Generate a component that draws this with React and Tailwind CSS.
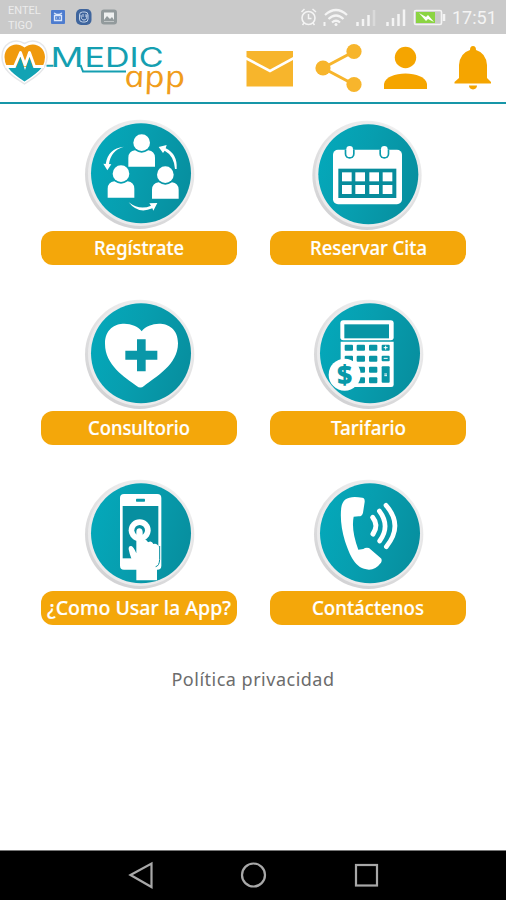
const BadgeDisc = ({ cx = 333, cy = 190, children }) => (
  <svg viewBox="150 18 348 342" className="ml-[39px] block h-[114px] w-[116px]">
    <defs>
      <linearGradient id="disc" x1="0" y1="0.3" x2="1" y2="0.6">
        <stop offset="0" stopColor="#04a8ba" />
        <stop offset="0.45" stopColor="#079eaf" />
        <stop offset="1" stopColor="#078f9f" />
      </linearGradient>
      <linearGradient id="rim" x1="0.8" y1="0" x2="0.2" y2="1">
        <stop offset="0" stopColor="#f2f2f2" />
        <stop offset="1" stopColor="#d0d0d2" />
      </linearGradient>
    </defs>
    <circle cx={cx - 4} cy={cy + 3} r="164" fill="url(#rim)" />
    <circle cx={cx - 2} cy={cy + 1} r="157" fill="#ebebec" />
    <circle cx={cx} cy={cy} r="150" fill="url(#disc)" />
    {children}
  </svg>
);

const Person = ({ x, y }) => (
  <g transform={`translate(${x} ${y})`} fill="#fff">
    <circle cx="0" cy="25" r="25" />
    <path d="M-40 97V70Q-39 50-20 48Q0 62 20 48Q39 50 40 70V97Z" />
  </g>
);

const RegisterIcon = () => (
  <BadgeDisc>
    <Person x={335} y={73} />
    <Person x={273} y={166} />
    <Person x={406} y={169} />
    <g fill="#fff">
      <path d="M281 110Q234 115 227 162L220 161L232 181L244 163L237 162Q242 122 281 110Z" />
      <path d="M440 177Q443 132 407 115L410 105L386 111L399 129L404 122Q432 137 435 177Z" />
      <path d="M296 277Q325 314 367 295L370 302L382 279L358 280L363 287Q329 302 296 277Z" />
    </g>
  </BadgeDisc>
);

const CalendarIcon = () => (
  <BadgeDisc cx={328} cy={193}>
    <rect x="222" y="119" width="207" height="164" rx="15" fill="#fff" />
    <rect x="238" y="176" width="174" height="88" fill="#078c9c" />
    {[187, 225].map((y) =>
      [249, 289, 331, 371].map((x) => (
        <rect key={`${x}-${y}`} x={x} y={y} width="29" height="27" fill="#fff" />
      ))
    )}
    {[272, 376].map((x) => (
      <g key={x}>
        <path d={`M${x - 15} 119V131a15 15 0 0 0 30 0V119Z`} fill="#0a9bac" />
        <rect x={x - 10} y="108" width="20" height="33" rx="10" fill="#fff" />
      </g>
    ))}
  </BadgeDisc>
);

const ClinicIcon = () => (
  <BadgeDisc>
    <path
      d="M335 124C309 90 225 89 225 161C225 226 285 261 320 288Q331 297 342 288C376 261 444 225 444 160C444 89 362 90 335 124Z"
      fill="#fff"
    />
    <path d="M321 148h26v34h35v27h-35v35h-26v-35h-35v-27h35Z" fill="#0a97a8" />
  </BadgeDisc>
);

const CalculatorIcon = () => (
  <BadgeDisc>
    <rect x="244" y="91" width="160" height="60" rx="9" fill="#fff" />
    <rect x="256" y="103" width="134" height="42" fill="#0895a5" />
    <path d="M245 155H404V284Q404 291 397 291H245Z" fill="#fff" />
    {[164, 197, 230, 262].map((y) =>
      [257, 293, 330].map((x) => (
        <rect key={`${x}-${y}`} x={x} y={y} width="25" height="18" rx="3" fill="#0895a5" />
      ))
    )}
    <rect x="368" y="164" width="24" height="18" rx="3" fill="#0895a5" />
    <rect x="368" y="197" width="24" height="17" rx="3" fill="#0895a5" />
    <rect x="368" y="229" width="24" height="49" rx="3" fill="#0895a5" />
    <path d="M374 173h12M380 167v12M374 205h12M376 252h8M376 257h8" stroke="#fff" strokeWidth="3" />
    <circle cx="257" cy="254" r="48" fill="#fff" />
    <text
      x="257"
      y="282"
      textAnchor="middle"
      fontFamily="Open Sans, sans-serif"
      fontWeight="800"
      fontSize="79"
      fill="#0899a9"
    >
      $
    </text>
  </BadgeDisc>
);

const TapPhoneIcon = () => (
  <BadgeDisc>
    <rect x="270" y="72" width="124" height="227" rx="12" fill="#fff" />
    <rect x="278" y="108" width="107" height="157" fill="#078fa0" />
    <rect x="318" y="86" width="27" height="9" rx="2" fill="#0899a9" />
    <circle cx="329" cy="181" r="33" fill="#fff" />
    <circle cx="329" cy="181" r="16" fill="#078fa0" />
    <path
      d="M319 331V297Q301 265 296 238Q295 227 304 228Q311 230 319 250V185Q320 175 328 175Q336 175 338 185V211Q350 205 354 217Q365 210 370 222Q382 218 387 232Q391 240 389 263Q388 283 381 296V331Z"
      fill="#fff"
    />
    <path d="M377 290Q388 288 389 268V228" stroke="#078fa0" strokeWidth="3" fill="none" />
  </BadgeDisc>
);

const CallIcon = () => (
  <BadgeDisc>
    <path
      d="M310 83Q318 84 317 96L312 128Q310 139 299 139L284 140Q276 180 298 239L313 237Q320 231 330 234L364 263Q371 268 366 278Q350 299 330 299C288 298 272 254 258 214C247 178 243 142 247 112Q252 72 310 83Z"
      fill="#fff"
    />
    <g fill="none" stroke="#fff" strokeLinecap="round">
      <path d="M341 142Q360 165 342 192" strokeWidth="15" />
      <path d="M361 123Q395 168 362 213" strokeWidth="14" />
      <path d="M381 106Q434 166 382 230" strokeWidth="14" />
    </g>
  </BadgeDisc>
);

const menu = [
  { label: "Regístrate", icon: RegisterIcon, width: 90 },
  { label: "Reservar Cita", icon: CalendarIcon, width: 117 },
  { label: "Consultorio", icon: ClinicIcon, width: 102 },
  { label: "Tarifario", icon: CalculatorIcon, width: 75 },
  { label: "¿Como Usar la App?", icon: TapPhoneIcon, width: 184 },
  { label: "Contáctenos", icon: CallIcon, width: 112 },
];

const StatusBar = () => (
  <div className="flex h-[34px] items-center bg-[#cacaca] pl-2 text-white">
    <div className="w-[42px] pt-0.5 font-['Roboto',sans-serif] text-[11px] leading-[15.500px] text-[#ececec]">
      <div>ENTEL</div>
      <div>TIGO</div>
    </div>
    <svg viewBox="0 0 70 18" className="h-[18px] w-[70px]">
      <rect x="1" y="2" width="14" height="14" rx="1" fill="#4d7ccf" />
      <path d="M4 5l3 1.5h2L12 5M4.500 7.500h7v5h-7zM6.500 9.500v1M9.500 9.500v1" stroke="#dbe7fb" strokeWidth="1.300" fill="none" />
      <rect x="26" y="1" width="15.500" height="16" rx="5" fill="#3f659d" />
      <rect x="29.500" y="4" width="8.500" height="10" rx="3" stroke="#c3d3e9" fill="none" />
      <path d="M31 7q0 5 3 5t3-5M33 6v3M36 6v3" stroke="#c3d3e9" fill="none" />
      <rect x="51" y="1.500" width="16" height="15" rx="3" fill="#929a9c" />
      <rect x="54" y="4.500" width="10" height="9" fill="#eef0f0" />
      <path d="M54 12l3-4 3 3 2-2 2 3v1H54z" fill="#929a9c" />
    </svg>
    <svg viewBox="298 0 150 34" className="ml-auto h-[34px] w-[150px]" fill="none" stroke="#f4f4f4">
      <circle cx="308.500" cy="18" r="6.500" strokeWidth="1.600" />
      <path d="M308.500 14v4.500h3M301.500 12l3-3M312.500 9l3.500 3M304 23l-1.500 2M313 23l1.500 2" strokeWidth="1.500" />
      <path d="M325 15q11-10 22 0M328.500 19q7.500-7 15 0M332 22.500q4-3.500 8 0" strokeWidth="2.200" />
      <circle cx="336" cy="24.500" r="1.500" fill="#f4f4f4" stroke="none" />
      <path d="M324.500 22v4" strokeWidth="2" />
      <path d="M357.500 22v4M363 19v7M368.500 15v11M387.500 22v4M393 18v8M398.500 14v12M404 9.500v16.500" strokeWidth="2.500" />
      <path d="M374 10v16" stroke="#dadada" strokeWidth="2.500" />
      <rect x="414.500" y="10.500" width="27" height="14" rx="1.500" strokeWidth="1.600" />
      <rect x="416" y="12" width="19" height="11" fill="#8bd442" stroke="none" />
      <path d="M444 14v7" strokeWidth="2.500" />
      <path d="M419 13l7 4 2-2 6 7-6-3-2 2Z" fill="#fff" stroke="none" />
    </svg>
    <span className="mr-[9px] ml-1 w-[45px] pt-0.5 font-['Roboto',sans-serif] text-[18px] leading-none text-[#f4f4f4]">
      17:51
    </span>
  </div>
);

const Logo = () => (
  <svg viewBox="0 34 190 66" className="h-[66px] w-[190px]">
    <path
      d="M24.500 43.500C14 37 2 44 2 57C2 71 16 78 24.500 84C33 78 47 71 47 57C47 44 35 37 24.500 43.500Z"
      fill="#fff"
      stroke="#e6e7e9"
      strokeWidth="1.500"
    />
    <path d="M24.500 47.500C16 40.500 4.500 46 4.500 57Q4.500 62 7 67H42.500Q45 62 45 57C45 46 33 40.500 24.500 47.500Z" fill="#f09a0d" />
    <path d="M8 67.500H16L20.500 57L25 70L29.500 57L33 67.500H42Q37 73.500 24.500 81.500Q12 73.500 8 67.500Z" fill="#12a3b4" />
    <path
      d="M5.500 66.500H14.500L20.500 52.500L25 65L29.500 52.500L34.500 66.500H44"
      fill="none"
      stroke="#fff"
      strokeWidth="2.800"
      strokeLinejoin="round"
    />
    <g fill="#159fb1" fontFamily="Inter, sans-serif" fontWeight="400" fontSize="27">
      <text x="50.500" y="66.500" textLength="33" lengthAdjust="spacingAndGlyphs">M</text>
      <text x="84.500" y="66.500" textLength="79" lengthAdjust="spacingAndGlyphs">EDIC</text>
    </g>
    <path d="M46.500 65.800H53.500M80.500 65L83 71.500H126" fill="none" stroke="#159fb1" strokeWidth="2" />
    <g transform="translate(126 87) skewX(12)">
      <text
        fontSize="30"
        fontFamily="Open Sans, sans-serif"
        fontStyle="italic"
        fontWeight="400"
        fill="#f09d1c"
        textLength="61"
        lengthAdjust="spacingAndGlyphs"
      >
        app
      </text>
    </g>
  </svg>
);

const Header = () => (
  <header className="flex h-[70px] items-start justify-between border-b-2 border-[#1796a8]">
    <Logo />
    <svg viewBox="240 34 266 66" className="h-[66px] w-[266px]" fill="#f7b52c">
      <path d="M246.500 51H293V57L270 69.500L246.500 57Z" />
      <path d="M246.500 60L270 72.500L293 60V86.500H246.500Z" />
      <path d="M354 51.500L323 68L354 84.500" fill="none" stroke="#f7b52c" strokeWidth="3" />
      <circle cx="354" cy="51.500" r="7.600" />
      <circle cx="323" cy="68" r="7.600" />
      <circle cx="354" cy="84.500" r="7.600" />
      <g fill="#f5a500">
        <circle cx="405.500" cy="57.500" r="10.700" />
        <path d="M384 89V84C386 70 425 70 427 84V89Z" />
        <path d="M470 50Q470 46 473 46Q476 46 476 50Q486 53 487 65V78L491 82V83.500H454.500V82L459 78V65Q460 53 470 50Z" />
        <path d="M469 85.500H477Q477 89 473 89.500Q469 89 469 85.500Z" />
      </g>
    </svg>
  </header>
);

const MenuItem = ({ label, icon: Icon, width }) => (
  <button className="block w-[196px]">
    <Icon />
    <span className="mt-px flex h-[34px] items-center justify-center rounded-[12px] bg-[#f4a70a]">
      <svg viewBox={`0 0 ${width} 28`} style={{ width }} className="h-7 overflow-visible">
        <text
          x="0"
          y="20.500"
          textLength={width}
          lengthAdjust="spacingAndGlyphs"
          fontFamily="Noto Sans, sans-serif"
          fontWeight="500"
          fontSize="19.500"
          fill="#fff"
          stroke="#fff"
          strokeWidth="0.200"
        >
          {label}
        </text>
      </svg>
    </span>
  </button>
);

const NavBar = () => (
  <nav className="h-[50px] border-t border-[#777] bg-black">
    <svg viewBox="0 851 506 49" className="h-[49px] w-full" fill="none" stroke="#a8a8a8" strokeWidth="2.200">
      <path d="M130.500 875L151.500 863.500V887Z" />
      <circle cx="253.500" cy="875" r="11.500" />
      <rect x="356" y="865" width="21" height="20.500" />
    </svg>
  </nav>
);

export default function App() {
  return (
    <div className="flex h-[900px] w-[506px] flex-col overflow-hidden bg-white">
      <StatusBar />
      <Header />
      <main className="flex-1 pt-3">
        <div className="ml-[41px] grid w-[425px] grid-cols-[196px_196px] justify-between gap-y-[31px]">
          {menu.map((item) => (
            <MenuItem key={item.label} {...item} />
          ))}
        </div>
        <a className="mt-10 block text-center font-['Noto_Sans',sans-serif] text-[18px] leading-[28px] tracking-[0.5px] text-[#6c6c6c]">
          Política privacidad
        </a>
      </main>
      <NavBar />
    </div>
  );
}
